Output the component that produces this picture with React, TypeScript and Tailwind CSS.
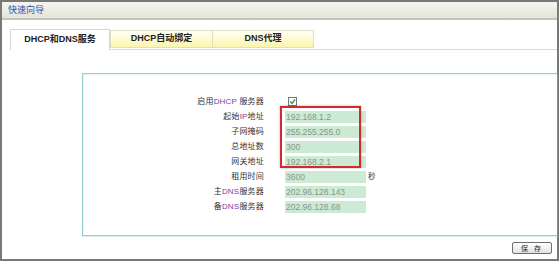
import React from "react";

const P = ({ children }: { children: React.ReactNode }) => (
  <span className="text-[#7b3f9e]">{children}</span>
);

type Row = { label: React.ReactNode; value?: string; check?: boolean; unit?: string };

const rows: Row[] = [
  { label: <>启用<P>DHCP</P> 服务器</>, check: true },
  { label: <>起始<P>IP</P>地址</>, value: "192.168.1.2" },
  { label: <>子网掩码</>, value: "255.255.255.0" },
  { label: <>总地址数</>, value: "300" },
  { label: <>网关地址</>, value: "192.168.2.1" },
  { label: <>租用时间</>, value: "3600", unit: "秒" },
  { label: <>主<P>DNS</P>服务器</>, value: "202.96.128.143" },
  { label: <>备<P>DNS</P>服务器</>, value: "202.96.128.68" },
];

export default function App() {
  return (
    <div
      className="w-[560px] h-[262px] bg-white"
      style={{ fontFamily: '"Liberation Sans", "Noto Sans CJK SC", sans-serif' }}
    >
      <div className="w-[559px] h-[261px] border-2 border-[#787878] flex flex-col">
        {/* header */}
        <div className="h-[18px] shrink-0 bg-gradient-to-b from-[#f6f6f0] to-[#e4e4da] border-b-2 border-[#c4c4ba] flex items-center pl-[6px]">
          <span className="text-[9px] leading-none text-[#2455b8]">快速向导</span>
        </div>

        {/* tabs */}
        <div className="mt-[9px] ml-[8px] h-[21px] shrink-0 flex items-end border-b border-[#dadada]">
          <div className="w-[100px] h-[21px] -mb-px bg-white border-t border-l border-r border-[#d6d6d6] flex items-center justify-center text-[9px] font-bold text-[#222]">
            DHCP和DNS服务
          </div>
          <div className="w-[103px] h-[18px] mb-px bg-gradient-to-b from-[#fffff4] to-[#fbf5ae] border border-[#e2dec6] flex items-center justify-center text-[9px] font-bold text-[#222]">
            DHCP自动绑定
          </div>
          <div className="w-[101px] h-[18px] mb-px bg-gradient-to-b from-[#fffff4] to-[#fbf5ae] border border-l-0 border-[#e2dec6] flex items-center justify-center text-[9px] font-bold text-[#222]">
            DNS代理
          </div>
        </div>

        {/* inner box */}
        <div className="relative mt-[23px] ml-[80px] h-[163px] shrink-0 border-t border-l border-b border-[#93d0d0] shadow-[inset_1px_1px_1px_#e4f5f5,0_1px_1px_#d8f0f0] pt-[20px]">
          <div className="flex flex-col">
            {rows.map((r, i) => (
              <div key={i} className="h-[15px] flex items-center">
                <div className="w-[181px] text-right text-[8px] leading-none text-[#333] tracking-[0.2px]">
                  {r.label}
                </div>
                <div className="w-[21px]" />
                {r.check ? (
                  <div className="ml-[3px] w-[9px] h-[9px] border border-[#5d7f8c] bg-white flex items-center justify-center">
                    <svg width="7" height="7" viewBox="0 0 7 7">
                      <path d="M1 3.5 L3 5.5 L6 1.5" fill="none" stroke="#3c9a2c" strokeWidth="1.4" />
                    </svg>
                  </div>
                ) : (
                  <div className="w-[81px] h-[12px] bg-[#cdebd4] pl-[1px] text-[8.5px] leading-[12px] text-[#85968b]">
                    {r.value}
                  </div>
                )}
                {r.unit && (
                  <span className="ml-[2px] text-[7.5px] leading-none text-[#333]">{r.unit}</span>
                )}
              </div>
            ))}
          </div>
          <div className="absolute left-[197px] top-[32px] w-[81px] h-[62px] border-2 border-[#cf2c2c] shadow-[0_0_2px_rgba(0,0,0,0.35)]" />
        </div>

        {/* button row */}
        <div className="flex justify-end mt-[6px] pr-[5px]">
          <div className="w-[40px] h-[12px] border border-[#6e6e6e] rounded-[2px] bg-gradient-to-b from-[#ffffff] to-[#e2e2e2] flex items-center justify-center text-[7px] leading-none text-[#222] tracking-[2px]">
            保 存
          </div>
        </div>
      </div>
    </div>
  );
}
